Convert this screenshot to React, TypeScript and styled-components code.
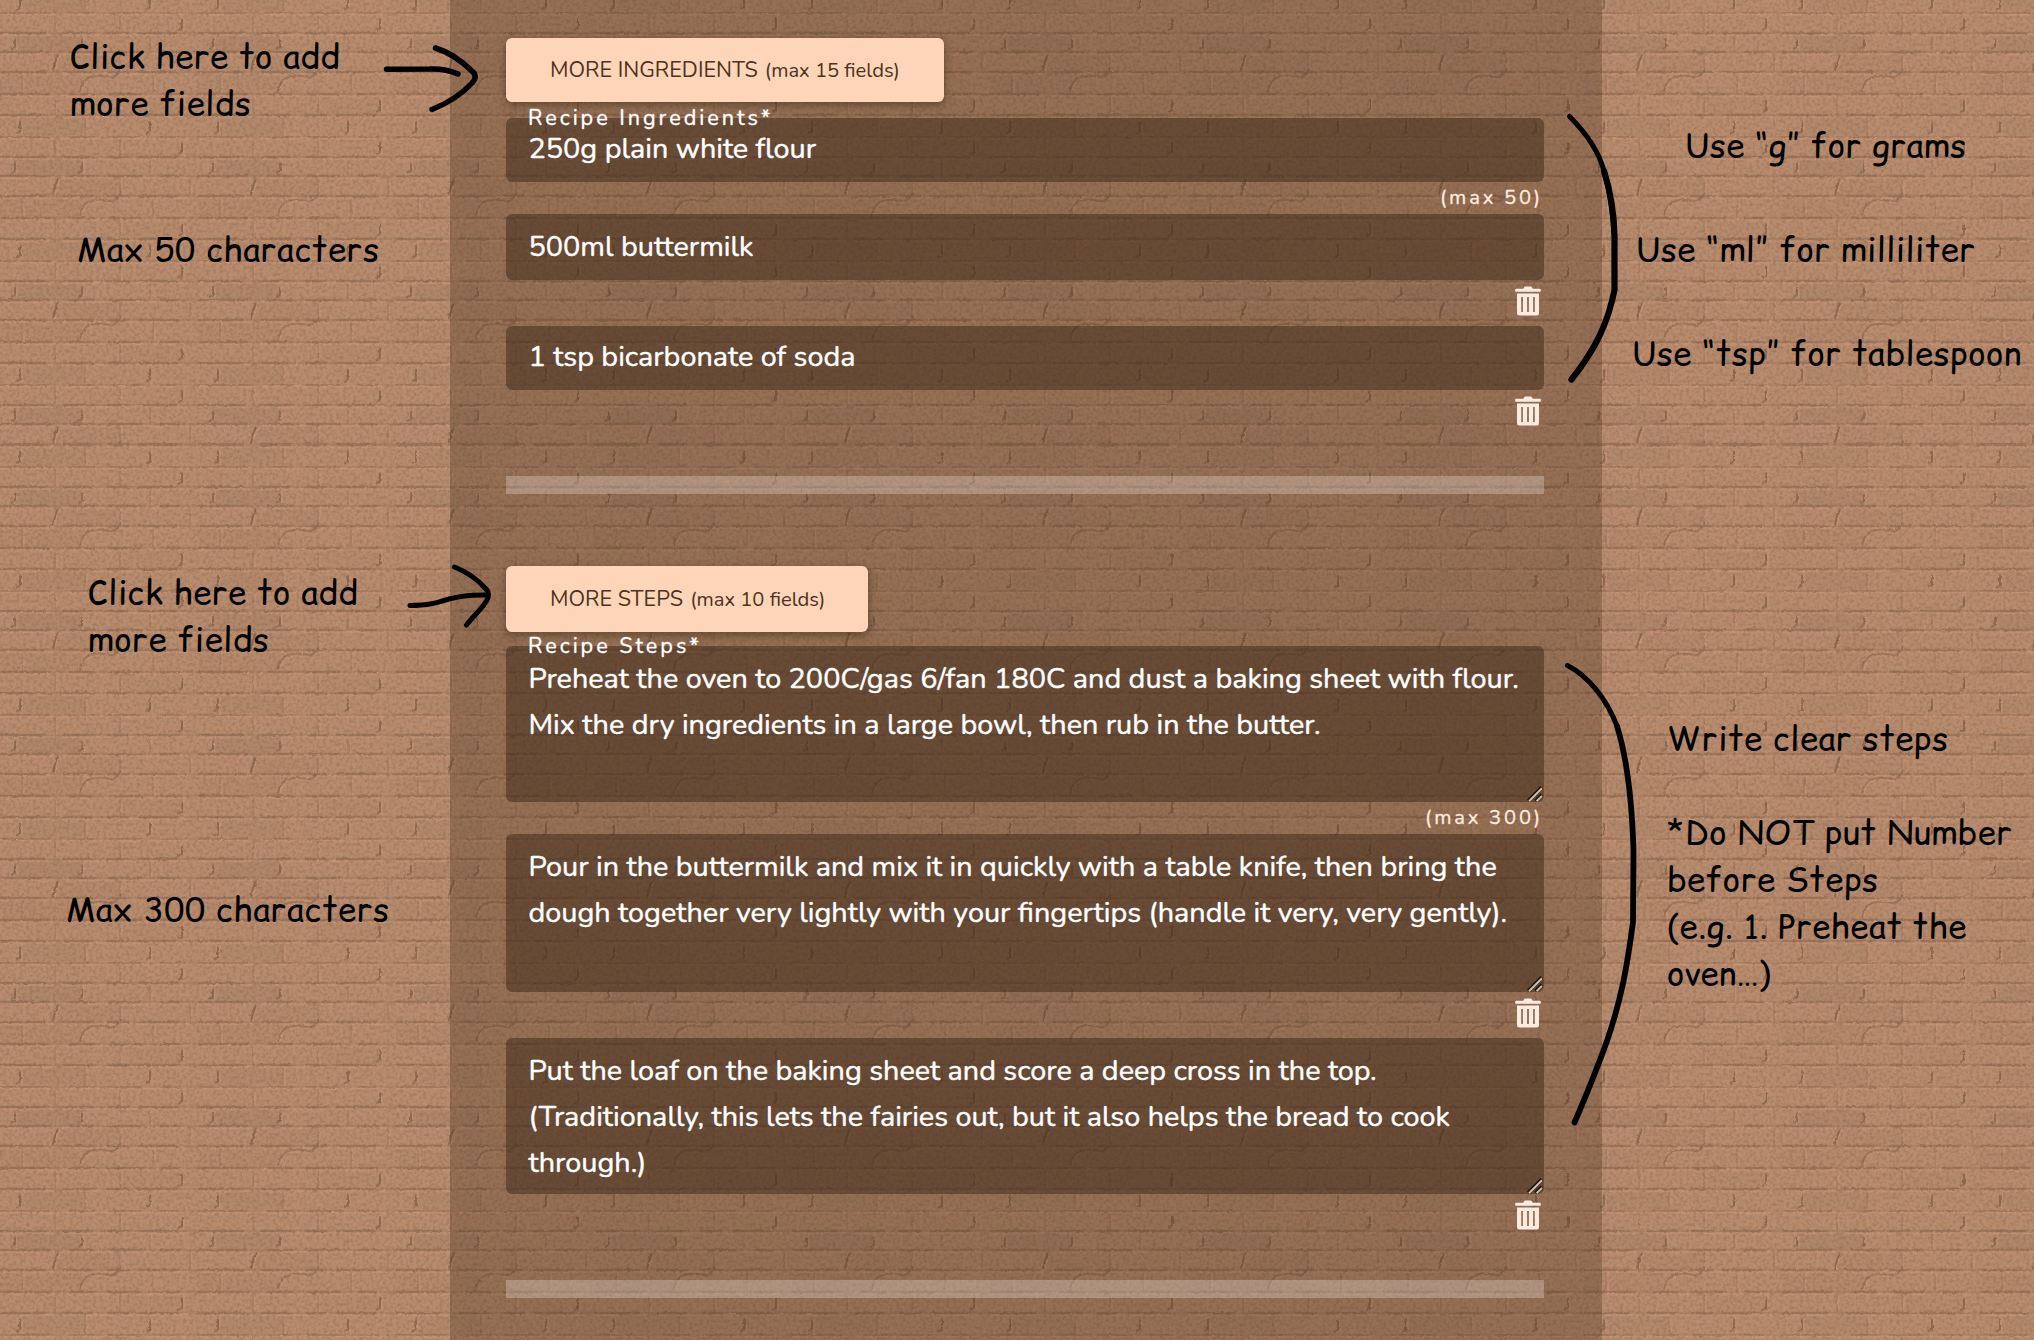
import React from "react";
import styled, { createGlobalStyle } from "styled-components";

const GlobalStyle = createGlobalStyle`
  *, *::before, *::after { box-sizing: border-box; }
  html, body { margin: 0; padding: 0; background: #b08568; }
  body { font-family: "Nunito", Lato, "Noto Sans", sans-serif; }
`;

const Page = styled.div`
  position: relative;
  isolation: isolate;
  display: grid;
  grid-template-columns: 450px 1152px 432px;
  width: 2034px;
  height: 1340px;
  overflow: hidden;
`;

const Backdrop = styled.svg`
  position: absolute;
  inset: 0;
  z-index: -1;
  width: 2034px;
  height: 1340px;
`;

const Markup = styled.svg`
  position: absolute;
  inset: 0;
  width: 2034px;
  height: 1340px;
  fill: none;
  stroke: #000;
  stroke-linecap: round;
  stroke-linejoin: round;
  pointer-events: none;
`;

const NoteColumn = styled.aside`
  display: flex;
  flex-direction: column;
  align-items: flex-start;
`;

const Note = styled.p<{ $top: number; $left: number }>`
  margin: ${(p) => p.$top}px 0 0 ${(p) => p.$left}px;
  display: flex;
  flex-direction: column;
  align-items: flex-start;
  font-family: "Chalkboard", "Comic Relief", "Comic Neue", Inter, sans-serif;
  font-size: 33px;
  line-height: 47px;
  letter-spacing: 0.48px;
  color: #000;
`;

const Line = styled.span<{ $track?: number }>`
  display: block;
  min-height: 1lh;
  white-space: pre;
  letter-spacing: ${(p) => (p.$track === undefined ? "inherit" : `${p.$track}px`)};
`;

const Panel = styled.main`
  display: flex;
  flex-direction: column;
  align-items: stretch;
  padding: 38px 58px 0 56px;
  background: rgba(60, 40, 20, 0.28);
`;

const MoreButton = styled.button<{ $width: number; $height: number }>`
  align-self: flex-start;
  display: flex;
  align-items: baseline;
  gap: 7px;
  width: ${(p) => p.$width}px;
  height: ${(p) => p.$height}px;
  padding: ${(p) => (p.$height - 26) / 2}px 0 0 44px;
  border: 0;
  border-radius: 6px;
  background: #ffd5b9;
  box-shadow: 0 3px 9px rgba(40, 22, 8, 0.45);
  color: #4c331d;
  font: 400 21.6px/27px "Nunito", Lato, sans-serif;
  white-space: nowrap;
`;

const Small = styled(Line)`
  font-size: 20.16px;
`;

const FieldGroup = styled.section<{ $gap: number }>`
  position: relative;
  display: flex;
  flex-direction: column;
  margin-top: ${(p) => p.$gap}px;
`;

const Label = styled.label`
  position: absolute;
  z-index: 1;
  left: 22px;
  top: -13px;
  font-size: 21.6px;
  line-height: 27px;
  color: #fff;
  -webkit-text-stroke: 0.35px #fff;
`;

const Field = styled.div<{ $height: number; $pad: number }>`
  position: relative;
  height: ${(p) => p.$height}px;
  padding: ${(p) => p.$pad}px 0 0 22.5px;
  border-radius: 6px;
  background: rgba(60, 40, 24, 0.5);
  color: #fff;
  font-size: 28.8px;
  line-height: 46px;
  -webkit-text-stroke: 0.45px #fff;
`;

const Foot = styled.div<{ $height: number }>`
  display: flex;
  justify-content: flex-end;
  height: ${(p) => p.$height}px;
  padding: 6px 3px 0 0;
  color: #fdebdf;
`;

const Limit = styled(Foot)`
  padding: 4px 1px 0 0;
  font-size: 20.16px;
  line-height: 24px;
  -webkit-text-stroke: 0.3px #fdebdf;
`;

const Divider = styled.hr<{ $gap: number }>`
  width: 100%;
  height: 18px;
  margin: ${(p) => p.$gap}px 0 0;
  border: 0;
  background: rgba(255, 255, 255, 0.25);
`;

const Grip = styled.svg`
  position: absolute;
  right: 1px;
  bottom: 0;
  width: 16px;
  height: 16px;
`;

const TrashSvg = styled.svg`
  width: 26px;
  height: 30px;
  flex: none;
`;

const Trash = () => (
  <TrashSvg viewBox="0 0 26 30" fill="#fdebdf">
    <path d="M8.3 2.7 L9.3 0.9 Q9.6 0.4 10.2 0.4 H15.8 Q16.4 0.4 16.7 0.9 L17.7 2.7 H25 Q25.8 2.7 25.8 3.5 V5 Q25.8 5.8 25 5.8 H1 Q0.2 5.8 0.2 5 V3.5 Q0.2 2.7 1 2.7 Z" />
    <path
      fillRule="evenodd"
      d="M2 7.6 H24 V27 Q24 29.5 21.5 29.5 H4.5 Q2 29.5 2 27 Z M6.2 11 V26 H7.9 V11 Z M12.1 11 V26 H13.9 V11 Z M18.1 11 V26 H19.8 V11 Z"
    />
  </TrashSvg>
);

const ResizeGrip = () => (
  <Grip viewBox="0 0 16 16" fill="none" strokeLinecap="butt">
    <path d="M1.4 15 L15 1.4 M8.8 15.2 L15 9" stroke="#1d140c" strokeWidth="4" />
    <path d="M2 15.3 L15 2.3 M9.6 15.3 L15 9.9" stroke="#cdbfb2" strokeWidth="2" />
  </Grip>
);

const TILE_W = 198;
const TILE_H = 124;
const courses = [0, 20.5, 39.5, 59.5, 81.5, 102.5];
const joints: { x: number; row: number; kind: "hook" | "thin" | "slant" }[] = [
  { x: 182, row: 0, kind: "hook" },
  { x: 55, row: 0, kind: "thin" },
  { x: 120, row: 0, kind: "thin" },
  { x: 150, row: 1, kind: "thin" },
  { x: 15, row: 1, kind: "hook" },
  { x: 82, row: 1, kind: "hook" },
  { x: 190, row: 2, kind: "thin" },
  { x: 55, row: 2, kind: "slant" },
  { x: 120, row: 2, kind: "thin" },
  { x: 153, row: 3, kind: "thin" },
  { x: 22, row: 3, kind: "thin" },
  { x: 182, row: 4, kind: "hook" },
  { x: 55, row: 4, kind: "thin" },
  { x: 120, row: 4, kind: "thin" },
  { x: 150, row: 5, kind: "hook" },
  { x: 20, row: 5, kind: "hook" },
  { x: 85, row: 5, kind: "thin" },
];

const BrickTile = () => (
  <>
    <rect width={TILE_W} height={TILE_H} fill="#b88c6e" />
    <rect x="15" y="21" width="67" height="18" fill="#b0876b" />
    <rect x="55" y="41" width="65" height="18" fill="#b4896c" />
    <rect x="0" y="61" width="82" height="20" fill="#b4896c" />
    <rect x="120" y="82" width="62" height="20" fill="#b68b6d" />
    <rect x="20" y="104" width="65" height="19" fill="#b3896c" />
    {courses.map((y, i) => (
      <g key={y} fill="none">
        <path d={`M0 ${y} h${TILE_W}`} stroke="#a27b60" strokeWidth="1.5" />
        <path
          d={`M0 ${y + 0.2} h${TILE_W}`}
          stroke="#8d6b55"
          strokeWidth="1.7"
          strokeDasharray={i % 2 ? "46 17 30 14 22 9 40 20" : "50 19 26 13 34 18 20 18"}
        />
        <path d={`M0 ${y + 2} h${TILE_W}`} stroke="#ca9675" strokeWidth="1.4" strokeDasharray="54 8 52 5 69 10" />
      </g>
    ))}
    {joints.map(({ x, row, kind }) => {
      const top = courses[row] + 3;
      const bottom = (courses[row + 1] ?? TILE_H) - 1;
      if (kind === "slant") {
        return (
          <g key={`${x}-${row}`} fill="none">
            <path d={`M${x + 3} ${top} L${x} ${top + 7} L${x - 2} ${bottom}`} stroke="#8c6952" strokeWidth="2.1" />
            <path d={`M${x + 5} ${top} L${x + 2} ${top + 8} L${x} ${bottom}`} stroke="#c89474" strokeWidth="1.2" />
          </g>
        );
      }
      const hook = kind === "hook";
      return (
        <g key={`${x}-${row}`} fill="none">
          <path
            d={hook ? `M${x} ${top + 3} V${bottom - 4} l-4 2` : `M${x} ${top} V${bottom}`}
            stroke={hook ? "#8d6a53" : "#a47c61"}
            strokeWidth={hook ? 1.9 : 1.3}
          />
          <path d={`M${x + 2} ${top} V${bottom}`} stroke="#c69273" strokeWidth="1.1" />
        </g>
      );
    })}
    <path d="M80 79 Q82 66 92 64 T112 65 Q118 63 121 56" fill="none" stroke="#936f57" strokeWidth="1.6" />
    <path d="M82 79 Q84 68 93 66 T113 67" fill="none" stroke="#c89474" strokeWidth="1.1" />
  </>
);

const BrickWall = () => (
  <Backdrop viewBox="0 0 2034 1340">
    <defs>
      <pattern id="bricksTop" width={TILE_W} height={TILE_H} patternUnits="userSpaceOnUse" y="12.5">
        <BrickTile />
      </pattern>
      <pattern id="bricksBottom" width={TILE_W} height={TILE_H} patternUnits="userSpaceOnUse" y="94.5">
        <BrickTile />
      </pattern>
      <filter id="rough" x="0" y="0" width="100%" height="100%" colorInterpolationFilters="sRGB">
        <feTurbulence type="fractalNoise" baseFrequency="0.25" numOctaves="2" seed="4" result="n" />
        <feDisplacementMap in="SourceGraphic" in2="n" scale="3" xChannelSelector="R" yChannelSelector="G" />
      </filter>
      <filter id="grain" x="0" y="0" width="100%" height="100%" colorInterpolationFilters="sRGB">
        <feTurbulence type="fractalNoise" baseFrequency="0.3" numOctaves="2" seed="9" />
        <feColorMatrix values="0 0 0 0 0.4  0 0 0 0 0.27  0 0 0 0 0.18  0 1.5 0 0 -0.6" />
      </filter>
    </defs>
    <g filter="url(#rough)">
      <rect x="-10" y="-10" width="2054" height="454.5" fill="url(#bricksTop)" />
      <rect x="-10" y="444" width="2054" height="906" fill="url(#bricksBottom)" />
    </g>
    <rect width="2034" height="1340" filter="url(#grain)" opacity="0.38" />
  </Backdrop>
);

export default function App() {
  return (
    <Page>
      <GlobalStyle />
      <BrickWall />

      <NoteColumn>
        <Note $top={33} $left={70}>
          <Line>Click here to add</Line>
          <Line $track={0.55}>more fields</Line>
        </Note>
        <Note $top={98.5} $left={77}>
          <Line $track={0.52}>Max 50 characters</Line>
        </Note>
        <Note $top={296.5} $left={88}>
          <Line>Click here to add</Line>
          <Line $track={0.55}>more fields</Line>
        </Note>
        <Note $top={223} $left={66}>
          <Line $track={0.55}>Max 300 characters</Line>
        </Note>
      </NoteColumn>

      <Panel>
        <MoreButton $width={438} $height={64}>
          <Line>MORE INGREDIENTS</Line>
          <Small>(max 15 fields)</Small>
        </MoreButton>
        <FieldGroup $gap={16}>
          <Label>
            <Line $track={2.98}>Recipe Ingredients*</Line>
          </Label>
          <Field $height={64} $pad={7.6}>
            <Line>250g plain white flour</Line>
          </Field>
          <Limit $height={32}>
            <Line $track={2.8}>(max 50)</Line>
          </Limit>
          <Field $height={66} $pad={10}>
            <Line>500ml buttermilk</Line>
          </Field>
          <Foot $height={46}>
            <Trash />
          </Foot>
          <Field $height={64} $pad={8}>
            <Line>1 tsp bicarbonate of soda</Line>
          </Field>
          <Foot $height={46}>
            <Trash />
          </Foot>
        </FieldGroup>
        <Divider $gap={40} />

        <FieldGroup $gap={72}>
          <MoreButton $width={362} $height={66}>
            <Line>MORE STEPS</Line>
            <Small>(max 10 fields)</Small>
          </MoreButton>
        </FieldGroup>
        <FieldGroup $gap={14}>
          <Label>
            <Line $track={2.98}>Recipe Steps*</Line>
          </Label>
          <Field $height={156} $pad={10}>
            <Line>Preheat the oven to 200C/gas 6/fan 180C and dust a baking sheet with flour.</Line>
            <Line>Mix the dry ingredients in a large bowl, then rub in the butter.</Line>
            <ResizeGrip />
          </Field>
          <Limit $height={32}>
            <Line $track={2.8}>(max 300)</Line>
          </Limit>
          <Field $height={158} $pad={10}>
            <Line>Pour in the buttermilk and mix it in quickly with a table knife, then bring the</Line>
            <Line>dough together very lightly with your fingertips (handle it very, very gently).</Line>
            <ResizeGrip />
          </Field>
          <Foot $height={46}>
            <Trash />
          </Foot>
          <Field $height={156} $pad={10}>
            <Line>Put the loaf on the baking sheet and score a deep cross in the top.</Line>
            <Line>(Traditionally, this lets the fairies out, but it also helps the bread to cook</Line>
            <Line>through.)</Line>
            <ResizeGrip />
          </Field>
          <Foot $height={46}>
            <Trash />
          </Foot>
        </FieldGroup>
        <Divider $gap={40} />
      </Panel>

      <NoteColumn>
        <Note $top={122} $left={83}>
          <Line>Use “g” for grams</Line>
        </Note>
        <Note $top={57} $left={34}>
          <Line>Use “ml” for milliliter</Line>
        </Note>
        <Note $top={57} $left={30}>
          <Line>Use “tsp” for tablespoon</Line>
        </Note>
        <Note $top={337.5} $left={65}>
          <Line $track={0.5}>Write clear steps</Line>
          <Line> </Line>
          <Line $track={0.52}>*Do NOT put Number</Line>
          <Line>before Steps</Line>
          <Line>(e.g. 1. Preheat the</Line>
          <Line $track={0.1}>oven…)</Line>
        </Note>
      </NoteColumn>

      <Markup viewBox="0 0 2034 1340">
        <path d="M386.5 69.3 L430 69 Q446 68.5 458 74" strokeWidth="5.5" />
        <path d="M435.5 48 C452 53 464 63 473 72 Q478 77 472 83 C461 95 448 103 432 109.5" strokeWidth="5.5" />
        <path d="M410 605.5 C428 605.5 436 603 449 599 C463 595 474 594.5 488 595" strokeWidth="5" />
        <path d="M454.5 567 C470 573 480 582 487 590 Q490 594 487 600 C482 609 474 615 466.5 625" strokeWidth="5" />
        <path d="M1569.5 116.5 C1585 132 1599 152 1604 171 C1610 190 1612.5 211 1614 234" strokeWidth="5" />
        <path d="M1604 171 C1610 190 1614 211 1614.5 236 V290 C1608 322 1597 347 1571.5 379.5" strokeWidth="6.2" />
        <path d="M1567.5 665.5 C1588 676 1606 698 1617 726" strokeWidth="5" />
        <path
          d="M1617 726 C1627 758 1632 804 1633.5 850 L1633 922 C1627 968 1621 1000 1607 1041 C1596 1072 1585 1098 1574.5 1122.5"
          strokeWidth="5.8"
        />
      </Markup>
    </Page>
  );
}
